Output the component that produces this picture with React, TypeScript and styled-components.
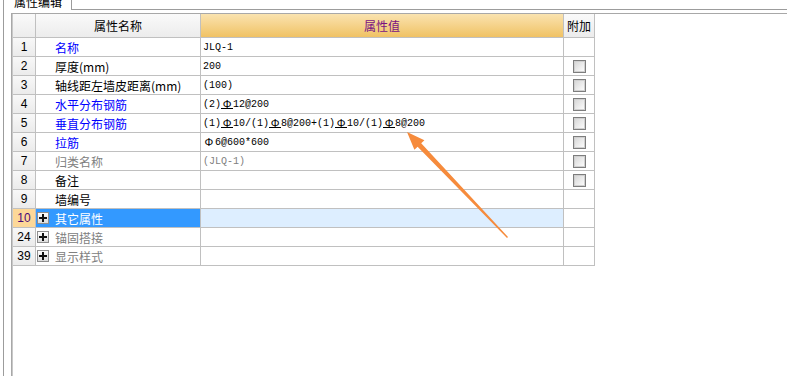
import * as React from 'react';
import styled, { createGlobalStyle, css } from 'styled-components';

type Tone = 'normal' | 'link' | 'muted';

type PropRow = {
  no: string;
  name: string;
  value?: string;
  tone?: Tone;
  check?: boolean;
  group?: boolean;
  active?: boolean;
};

const GlobalStyle = createGlobalStyle`
  html, body {
    margin: 0;
    padding: 0;
    background: #fff;
  }
  body {
    width: 787px;
    height: 376px;
    overflow: hidden;
    font-family: "Noto Sans CJK SC", "Liberation Sans", sans-serif;
    font-size: 12px;
    color: #000;
  }
`;

const COLS = '23px 165px 363px 31px';
const GRID = '#c0c0c0';

const Page = styled.div`
  position: relative;
  width: 787px;
  height: 376px;
  padding-left: 3px;
  box-sizing: border-box;
  background: #fff;
`;

const Pane = styled.div`
  height: 100%;
  border-left: 1px solid #9c9c9c;
  display: flex;
  flex-direction: column;
`;

const TabStrip = styled.div`
  display: flex;
  height: 13px;
  flex-shrink: 0;
`;

const Tab = styled.div`
  width: 68px;
  height: 10px;
  box-sizing: border-box;
  border-right: 1px solid #9c9c9c;
  padding-left: 10px;
  overflow: hidden;
`;

const TabLabel = styled.span`
  display: block;
  line-height: 12px;
  margin-top: -4px;
  white-space: nowrap;
`;

const TabRest = styled.div`
  flex: 1;
  height: 10px;
  box-sizing: border-box;
  border-bottom: 1px solid #9c9c9c;
`;

const Body = styled.div`
  flex: 1;
  display: flex;
  padding-left: 7px;
`;

const Panel = styled.div`
  flex: 1;
  border-left: 1px solid #a8a8a8;
  border-top: 1px solid #a8a8a8;
  box-shadow: inset 1px 0 0 #c8c8c8;
  padding-left: 1px;
`;

const Table = styled.div`
  display: flex;
  flex-direction: column;
  width: 582px;
`;

const HeaderRow = styled.div`
  display: grid;
  grid-template-columns: ${COLS};
  height: 24px;
`;

const Row = styled.div`
  display: grid;
  grid-template-columns: ${COLS};
  height: 19px;
`;

const cellBase = css`
  box-sizing: border-box;
  border-right: 1px solid ${GRID};
  border-bottom: 1px solid ${GRID};
  display: flex;
  align-items: center;
  white-space: nowrap;
  overflow: hidden;
`;

const HeadCell = styled.div<{ $hot?: boolean }>`
  ${cellBase};
  justify-content: center;
  font-size: 12px;
  color: ${(p) => (p.$hot ? '#7a1282' : '#000')};
  background: ${(p) =>
    p.$hot
      ? 'linear-gradient(to bottom, #fae3b0, #f0c264)'
      : 'linear-gradient(to bottom, #fafafa, #ececec)'};
`;

const NumCell = styled.div<{ $active?: boolean }>`
  ${cellBase};
  justify-content: center;
  font-family: "Liberation Sans", sans-serif;
  font-size: 12px;
  color: ${(p) => (p.$active ? '#4a0a78' : '#000')};
  background: ${(p) =>
    p.$active ? '#fdd898' : 'linear-gradient(to bottom, #f8f8f8, #ebebeb)'};
`;

const toneColor: Record<Tone, string> = {
  normal: '#000',
  link: '#0000ff',
  muted: '#808080',
};

const NameCell = styled.div<{ $tone: Tone; $group?: boolean; $active?: boolean }>`
  ${cellBase};
  padding-left: ${(p) => (p.$group ? '1px' : '19px')};
  gap: 6px;
  font-size: 12px;
  color: ${(p) => (p.$active ? '#fff' : toneColor[p.$tone])};
  background: ${(p) => (p.$active ? '#3399ff' : '#fff')};
`;

const ValueCell = styled.div<{ $muted?: boolean; $active?: boolean }>`
  ${cellBase};
  padding-left: 2px;
  font-family: "Liberation Mono", "Noto Sans CJK SC", monospace;
  font-size: 10px;
  color: ${(p) => (p.$muted ? '#808080' : '#000')};
  background: ${(p) => (p.$active ? '#ddeeff' : '#fff')};
`;

const ExtraCell = styled.div`
  ${cellBase};
  justify-content: center;
  background: #fff;
`;

const Expander = styled.span`
  flex-shrink: 0;
  width: 12px;
  height: 12px;
  box-sizing: border-box;
  border: 1px solid #8e8e8e;
  background:
    linear-gradient(#111, #111) center / 8px 2px no-repeat,
    linear-gradient(#111, #111) center / 2px 8px no-repeat,
    linear-gradient(to bottom, #ffffff, #dcdcdc);
`;

const CheckBox = styled.span`
  width: 13px;
  height: 13px;
  box-sizing: border-box;
  border: 1px solid #7d7d7d;
  box-shadow: inset 0 0 0 1px #d0d0d0;
  background: linear-gradient(135deg, #d4d4d4, #ffffff);
`;

const Rebar = styled.span<{ $grade?: boolean }>`
  display: inline-block;
  width: 12px;
  height: 10px;
  line-height: 10px;
  text-align: center;
  font-family: "Liberation Sans", sans-serif;
  font-size: 11px;
  vertical-align: -1px;
  box-sizing: border-box;
  padding: 0 1px;
  border-bottom: ${(p) => (p.$grade ? '1px solid currentColor' : '0')};
`;

const Overlay = styled.svg`
  position: absolute;
  left: 0;
  top: 0;
  pointer-events: none;
`;

const rows: PropRow[] = [
  { no: '1', name: '名称', value: 'JLQ-1', tone: 'link' },
  { no: '2', name: '厚度(mm)', value: '200', check: true },
  { no: '3', name: '轴线距左墙皮距离(mm)', value: '(100)', check: true },
  { no: '4', name: '水平分布钢筋', value: '(2){C}12@200', tone: 'link', check: true },
  {
    no: '5',
    name: '垂直分布钢筋',
    value: '(1){C}10/(1){C}8@200+(1){C}10/(1){C}8@200',
    tone: 'link',
    check: true,
  },
  { no: '6', name: '拉筋', value: '{A}6@600*600', tone: 'link', check: true },
  { no: '7', name: '归类名称', value: '(JLQ-1)', tone: 'muted', check: true },
  { no: '8', name: '备注', check: true },
  { no: '9', name: '墙编号' },
  { no: '10', name: '其它属性', group: true, active: true },
  { no: '24', name: '锚固搭接', group: true, tone: 'muted' },
  { no: '39', name: '显示样式', group: true, tone: 'muted' },
];

function renderValue(v?: string) {
  if (!v) return null;
  return v.split(/(\{[AC]\})/).map((part, i) => {
    if (part === '{C}') return <Rebar key={i} $grade>Φ</Rebar>;
    if (part === '{A}') return <Rebar key={i}>Φ</Rebar>;
    return <React.Fragment key={i}>{part}</React.Fragment>;
  });
}

export default function App() {
  return (
    <Page>
      <GlobalStyle />
      <Pane>
        <TabStrip>
          <Tab>
            <TabLabel>属性编辑</TabLabel>
          </Tab>
          <TabRest />
        </TabStrip>
        <Body>
          <Panel>
            <Table>
              <HeaderRow>
                <HeadCell />
                <HeadCell>属性名称</HeadCell>
                <HeadCell $hot>属性值</HeadCell>
                <HeadCell>附加</HeadCell>
              </HeaderRow>
              {rows.map((r) => {
                const tone = r.tone ?? 'normal';
                return (
                  <Row key={r.no}>
                    <NumCell $active={r.active}>{r.no}</NumCell>
                    <NameCell $tone={tone} $group={r.group} $active={r.active}>
                      {r.group && <Expander />}
                      {r.name}
                    </NameCell>
                    <ValueCell $muted={tone === 'muted'} $active={r.active}>
                      {renderValue(r.value)}
                    </ValueCell>
                    <ExtraCell>{r.check && <CheckBox />}</ExtraCell>
                  </Row>
                );
              })}
            </Table>
          </Panel>
        </Body>
      </Pane>
      <Overlay width={787} height={376} viewBox="0 0 787 376">
        <polygon
          points="407,132 424.4,140.2 421.2,143.3 508,237 507,238 417.6,146.7 414.4,149.8"
          fill="#f68b3c"
        />
      </Overlay>
    </Page>
  );
}
